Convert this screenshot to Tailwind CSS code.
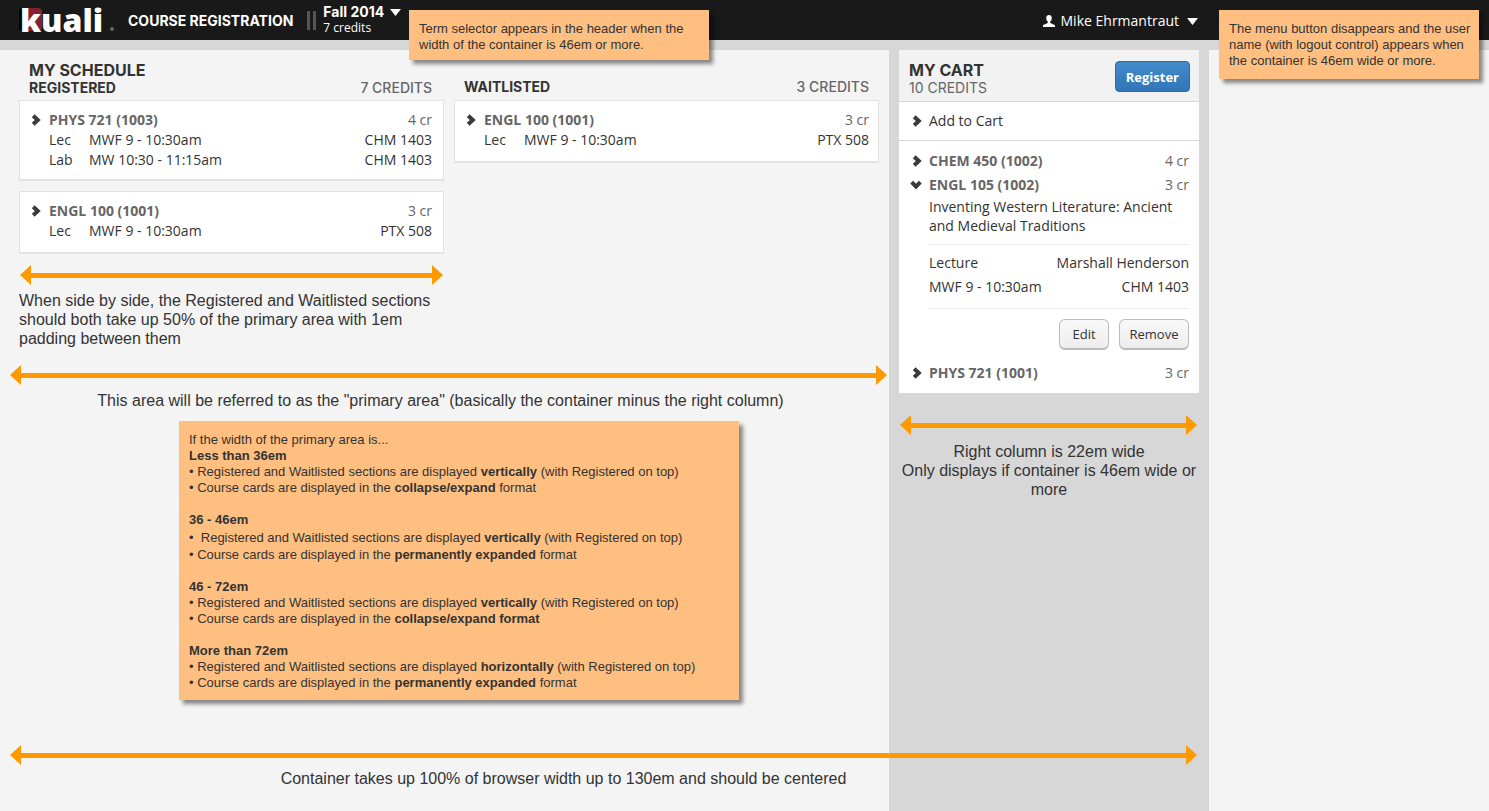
<!DOCTYPE html>
<html lang="en">
<head>
<meta charset="utf-8">
<meta name="viewport" content="width=device-width, initial-scale=1">
<title>Kuali Course Registration</title>
<script src="https://cdn.jsdelivr.net/npm/@tailwindcss/browser@4"></script>
</head>
<body class="relative flex min-h-screen flex-col bg-[#f4f4f4] font-['Open_Sans',sans-serif] text-sm leading-5 text-[#333]">

<svg class="hidden" aria-hidden="true">
  <symbol id="chev" viewBox="0 0 10 12"><path d="M2.200 1.700 6.800 6 2.200 10.300" fill="none" stroke="#3a3a3a" stroke-width="4"/></symbol>
  <symbol id="chev-down" viewBox="0 0 12 10"><path d="M1.700 2.200 6 6.600 10.300 2.200" fill="none" stroke="#3a3a3a" stroke-width="4"/></symbol>
  <symbol id="caret" viewBox="0 0 11 7"><path d="M0 0h11L5.500 7z" fill="#fff"/></symbol>
  <symbol id="tip-left" viewBox="0 0 11 20"><path d="M11 0v20L0 10z" fill="#f90"/></symbol>
  <symbol id="tip-right" viewBox="0 0 11 20"><path d="M0 0v20l11-10z" fill="#f90"/></symbol>
</svg>

<header class="flex h-10 items-center justify-between bg-[#191919] pr-[291px] pl-[19px] text-white">
  <div class="flex items-center">
    <a href="#" aria-label="Kuali" class="relative flex h-10 w-[109px] items-center pl-px">
      <span class="absolute top-2 left-0 h-[23px] w-[9px] rounded-sm bg-black"></span>
      <span class="absolute top-2 left-[9px] h-[23px] w-[14px] rounded-r-sm bg-[#84202f]"></span>
      <span class="relative font-['Open_Sans',sans-serif] text-[32px] leading-10 font-extrabold">kuali</span>
      <span class="absolute top-[27px] left-[91px] size-1 rounded-full bg-[#666]"></span>
    </a>
    <h1 class="pt-px font-['Inter',sans-serif] text-sm font-bold whitespace-nowrap">COURSE REGISTRATION</h1>
    <span class="ml-3.5 flex gap-[3px]"><span class="h-[19px] w-[3px] bg-[#555]"></span><span class="h-[19px] w-[3px] bg-[#555]"></span></span>
    <div class="ml-[7px]">
      <button type="button" class="flex items-center gap-1.5 font-['Inter',sans-serif] text-sm leading-4 font-bold whitespace-nowrap">Fall 2014 <svg class="h-[7px] w-[11px]"><use href="#caret"/></svg></button>
      <p class="text-xs leading-4">7 credits</p>
    </div>
  </div>
  <button type="button" class="flex items-center gap-1.5 pt-0.5 whitespace-nowrap">
    <svg class="h-3 w-3" viewBox="0 0 12 12" fill="#fff"><path d="M6 0C4.300 0 3.200 1.100 3.200 2.800c0 1.900.7 3.200 1.600 4v1.100C3.500 8.700.3 9.300 0 10.600V12h12v-1.400c-.3-1.300-3.500-1.900-4.800-2.700V6.800c.9-.8 1.600-2.100 1.600-4C8.800 1.100 7.700 0 6 0z"/></svg>
    <span>Mike Ehrmantraut</span>
    <svg class="ml-0.5 h-[7px] w-[11px]"><use href="#caret"/></svg>
  </button>
</header>

<div class="h-2.5 bg-[#d7d7d7]"></div>

<div class="flex flex-1 flex-col pr-[280px]">
<div class="relative flex flex-1">
  <main class="min-w-0 flex-1">
    <div class="grid grid-cols-2 gap-2.5 pt-2.5 pr-2.5 pl-[19px]">
      <section>
        <div class="flex h-10 items-end justify-between px-2.5 pr-3 pb-[3px] font-['Inter',sans-serif]">
          <div>
            <h2 class="text-base leading-[18px] font-bold">MY SCHEDULE</h2>
            <h3 class="text-sm leading-[18px] font-bold">REGISTERED</h3>
          </div>
          <p class="text-sm leading-[18px] font-medium text-[#666]">7 CREDITS</p>
        </div>
        <article class="border border-b-2 border-[#e3e3e3] bg-white pt-[9px] pr-[11px] pb-[9px] pl-[11px]">
          <div class="flex justify-between text-[#666]">
            <button type="button" class="flex items-center font-bold"><svg class="mr-2 h-3 w-2.5"><use href="#chev"/></svg>PHYS 721 (1003)</button><span>4 cr</span>
          </div>
          <div class="flex pl-[18px]"><span class="w-10">Lec</span><span class="flex-1">MWF 9 - 10:30am</span><span>CHM 1403</span></div>
          <div class="flex pl-[18px]"><span class="w-10">Lab</span><span class="flex-1">MW 10:30 - 11:15am</span><span>CHM 1403</span></div>
        </article>
        <article class="mt-2.5 border border-b-2 border-[#e3e3e3] bg-white pt-[9px] pr-[11px] pb-[11px] pl-[11px]">
          <div class="flex justify-between text-[#666]">
            <button type="button" class="flex items-center font-bold"><svg class="mr-2 h-3 w-2.5"><use href="#chev"/></svg>ENGL 100 (1001)</button><span>3 cr</span>
          </div>
          <div class="flex pl-[18px]"><span class="w-10">Lec</span><span class="flex-1">MWF 9 - 10:30am</span><span>PTX 508</span></div>
        </article>
        <div class="mt-[11px] flex items-center px-px"><svg class="h-5 w-[11px]"><use href="#tip-left"/></svg><span class="h-[5px] flex-1 bg-[#f90]"></span><svg class="h-5 w-[11px]"><use href="#tip-right"/></svg></div>
        <p class="mt-1.5 font-['Liberation_Sans',sans-serif] text-base leading-[19px]">When side by side, the Registered and Waitlisted sections should both take up 50% of the primary area with 1em padding between them</p>
      </section>
      <section>
        <div class="flex h-10 items-end justify-between px-2.5 pb-1 font-['Inter',sans-serif]">
          <h3 class="text-sm leading-[18px] font-bold">WAITLISTED</h3>
          <p class="text-sm leading-[18px] font-medium text-[#666]">3 CREDITS</p>
        </div>
        <article class="border border-b-2 border-[#e3e3e3] bg-white pt-[9px] pr-[9px] pb-[11px] pl-[11px]">
          <div class="flex justify-between text-[#666]">
            <button type="button" class="flex items-center font-bold"><svg class="mr-2 h-3 w-2.5"><use href="#chev"/></svg>ENGL 100 (1001)</button><span>3 cr</span>
          </div>
          <div class="flex pl-[18px]"><span class="w-10">Lec</span><span class="flex-1">MWF 9 - 10:30am</span><span>PTX 508</span></div>
        </article>
      </section>
    </div>

    <div class="mt-[17px] flex items-center pr-0.5 pl-2.5"><svg class="h-5 w-[11px]"><use href="#tip-left"/></svg><span class="h-[5px] flex-1 bg-[#f90]"></span><svg class="h-5 w-[11px]"><use href="#tip-right"/></svg></div>
    <p class="mt-1.5 pr-2 text-center font-['Liberation_Sans',sans-serif] text-base leading-[19px]">This area will be referred to as the "primary area" (basically the container minus the right column)</p>

    <div class="mt-[11px] ml-[179px] max-w-[560px] bg-[#ffbf80] px-2.5 pt-[11px] pb-[9px] font-['Liberation_Sans',sans-serif] text-[13px] leading-4 shadow-[4px_4px_4px_rgba(0,0,0,0.45)]">
      <p>If the width of the primary area is...</p>
      <h4 class="font-bold">Less than 36em</h4>
      <ul class="mb-4">
        <li>• Registered and Waitlisted sections are displayed <b>vertically</b> (with Registered on top)</li>
        <li>• Course cards are displayed in the <b>collapse/expand</b> format</li>
      </ul>
      <h4 class="font-bold">36 - 46em</h4>
      <ul class="mb-4">
        <li class="pt-0.5 pb-px">•&nbsp; Registered and Waitlisted sections are displayed <b>vertically</b> (with Registered on top)</li>
        <li>• Course cards are displayed in the <b>permanently expanded</b> format</li>
      </ul>
      <h4 class="font-bold">46 - 72em</h4>
      <ul class="mb-4">
        <li>• Registered and Waitlisted sections are displayed <b>vertically</b> (with Registered on top)</li>
        <li>• Course cards are displayed in the <b>collapse/expand format</b></li>
      </ul>
      <h4 class="font-bold">More than 72em</h4>
      <ul>
        <li>• Registered and Waitlisted sections are displayed <b>horizontally</b> (with Registered on top)</li>
        <li>• Course cards are displayed in the <b>permanently expanded</b> format</li>
      </ul>
    </div>
  </main>

  <aside class="w-80 shrink-0 bg-[#d7d7d7] px-2.5">
    <div class="bg-white">
      <div class="flex items-start justify-between border-b border-[#d7d7d7] bg-[#f2f2f2] pt-[11px] pr-[9px] pb-1 pl-2.5">
        <div class="font-['Inter',sans-serif]">
          <h2 class="text-base leading-[18px] font-bold">MY CART</h2>
          <p class="text-sm leading-[18px] text-[#666]">10 CREDITS</p>
        </div>
        <button type="button" class="h-[31px] rounded border border-[#2d6ca2] bg-linear-to-b from-[#428bca] to-[#3276b8] px-2.5 text-[13px] font-bold text-white">Register</button>
      </div>
      <div class="border-b border-[#d7d7d7] py-[9px] pl-[13px]">
        <button type="button" class="flex items-center"><svg class="mr-[7px] h-3 w-2.5"><use href="#chev"/></svg>Add to Cart</button>
      </div>
      <div class="pt-2 pr-2.5 pb-2 pl-[13px]">
        <div class="flex justify-between leading-6 text-[#666]">
          <button type="button" class="flex items-center font-bold"><svg class="mr-[7px] h-3 w-2.5"><use href="#chev"/></svg>CHEM 450 (1002)</button><span>4 cr</span>
        </div>
        <div class="flex justify-between leading-6 text-[#666]">
          <button type="button" class="-ml-0.5 flex items-center font-bold"><svg class="mr-[7px] h-2.5 w-3"><use href="#chev-down"/></svg>ENGL 105 (1002)</button><span>3 cr</span>
        </div>
        <div class="pl-[17px]">
          <p class="border-b border-[#eee] pb-[9px] leading-[19px]">Inventing Western Literature: Ancient and Medieval Traditions</p>
          <div class="border-b border-[#eee] pt-1.5 pb-[9px] leading-6">
            <div class="flex justify-between"><span>Lecture</span><span>Marshall Henderson</span></div>
            <div class="flex justify-between"><span>MWF 9 - 10:30am</span><span>CHM 1403</span></div>
          </div>
          <div class="flex justify-end gap-2.5 pt-2.5 pb-[11px] text-[13px]">
            <button type="button" class="h-[31px] w-[50px] rounded-md border border-b-2 border-[#bbb] bg-linear-to-b from-[#f9f9f9] to-[#ededed]">Edit</button>
            <button type="button" class="h-[31px] w-[70px] rounded-md border border-b-2 border-[#bbb] bg-linear-to-b from-[#f9f9f9] to-[#ededed]">Remove</button>
          </div>
        </div>
        <div class="flex justify-between leading-6 text-[#666]">
          <button type="button" class="flex items-center font-bold"><svg class="mr-[7px] h-3 w-2.5"><use href="#chev"/></svg>PHYS 721 (1001)</button><span>3 cr</span>
        </div>
      </div>
    </div>
    <div class="mt-[22px] flex items-center pr-0.5 pl-px"><svg class="h-5 w-[11px]"><use href="#tip-left"/></svg><span class="h-[5px] flex-1 bg-[#f90]"></span><svg class="h-5 w-[11px]"><use href="#tip-right"/></svg></div>
    <p class="mt-[7px] text-center font-['Liberation_Sans',sans-serif] text-base leading-[19px]">Right column is 22em wide<br>Only displays if container is 46em wide or more</p>
  </aside>

  <div class="absolute right-3 bottom-[23px] left-2.5">
    <div class="flex items-center"><svg class="h-5 w-[11px]"><use href="#tip-left"/></svg><span class="h-[5px] flex-1 bg-[#f90]"></span><svg class="h-5 w-[11px]"><use href="#tip-right"/></svg></div>
    <p class="mt-1 pr-20 text-center font-['Liberation_Sans',sans-serif] text-base leading-[19px]">Container takes up 100% of browser width up to 130em and should be centered</p>
  </div>
</div>
</div>

<p class="absolute top-2.5 left-[409px] w-[300px] bg-[#ffbf80] px-2.5 pt-[11px] pb-[7px] font-['Liberation_Sans',sans-serif] text-[13px] leading-4 shadow-[4px_4px_4px_rgba(0,0,0,0.45)]">Term selector appears in the header when the width of the container is 46em or more.</p>
<p class="absolute top-2.5 right-2.5 w-[260px] bg-[#ffbf80] pt-[11px] pr-2 pb-2.5 pl-2.5 font-['Liberation_Sans',sans-serif] text-[13px] leading-4 shadow-[4px_4px_4px_rgba(0,0,0,0.45)]">The menu button disappears and the user name (with logout control) appears when the container is 46em wide or more.</p>
</body>
</html>
